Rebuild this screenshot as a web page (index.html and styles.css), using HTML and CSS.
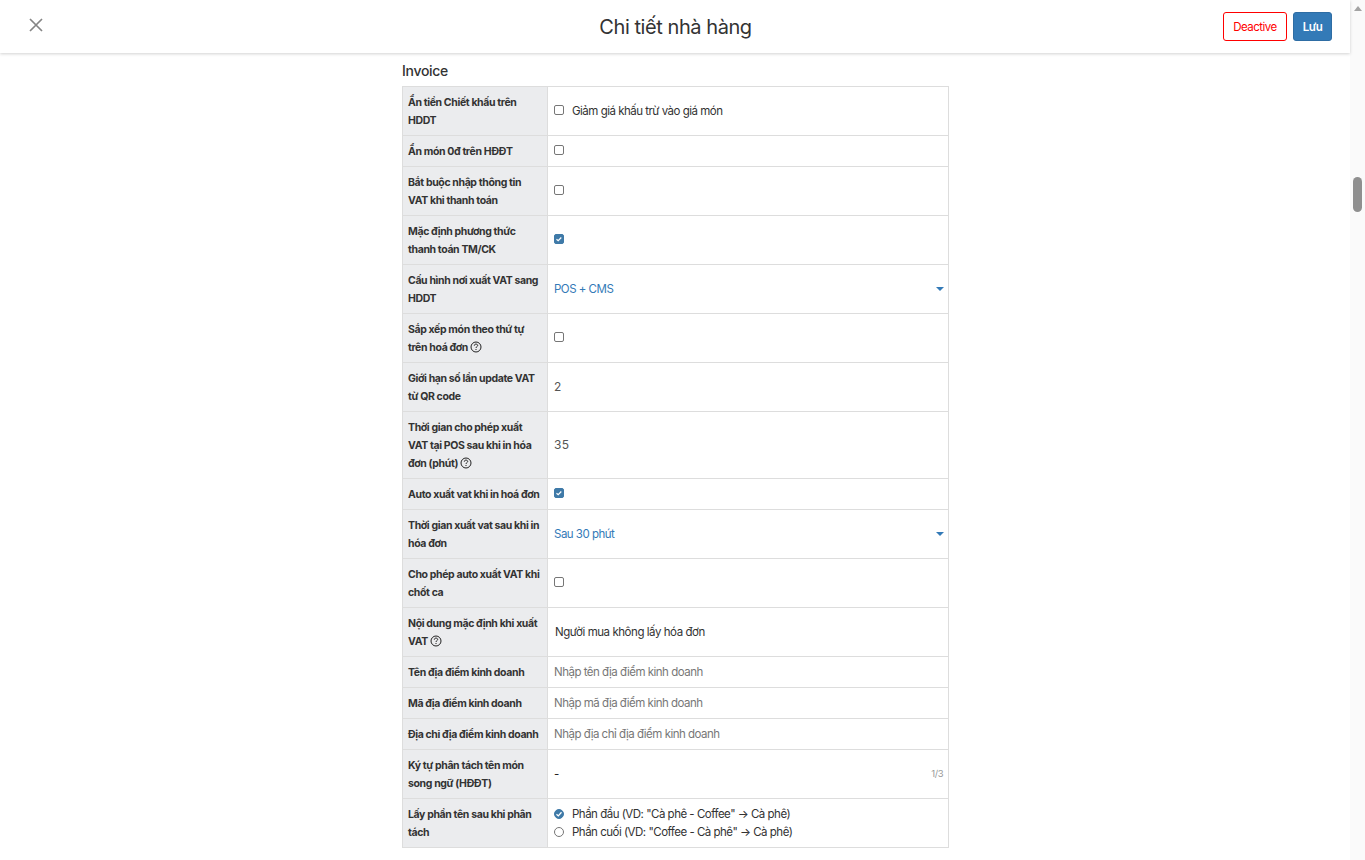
FILE: index.html
```html
<!DOCTYPE html>
<html lang="vi">
<head>
<meta charset="utf-8">
<title>Chi tiết nhà hàng</title>
<link rel="stylesheet" href="styles.css">
</head>
<body>
<div class="page">
	<div class="main">
		<div class="header">
			<button class="close" aria-label="Đóng">
				<svg width="14" height="14" viewBox="0 0 14 14"><path d="M1 1L13 13M13 1L1 13" stroke="#858585" stroke-width="1.7" fill="none"/></svg>
			</button>
			<div class="title">Chi tiết nhà hàng</div>
			<div class="actions">
				<button class="btn btnDeactive">Deactive</button>
				<button class="btn btnSave">Lưu</button>
			</div>
		</div>
		<div class="content">
			<div class="sectionTitle">Invoice</div>
			<div class="form">
				<div class="row">
					<div class="label">Ẩn tiền Chiết khấu trên HDDT</div>
					<div class="value"><span class="check"></span><span class="checkText">Giảm giá khấu trừ vào giá món</span></div>
				</div>
				<div class="row">
					<div class="label">Ẩn món 0đ trên HĐĐT</div>
					<div class="value"><span class="check"></span></div>
				</div>
				<div class="row">
					<div class="label">Bắt buộc nhập thông tin VAT khi thanh toán</div>
					<div class="value"><span class="check"></span></div>
				</div>
				<div class="row">
					<div class="label">Mặc định phương thức thanh toán TM/CK</div>
					<div class="value"><span class="check checked"><svg width="8" height="8" viewBox="0 0 8 8"><path d="M1.5 4.2L3.2 5.7L6.3 2.5" stroke="#fff" stroke-width="1.2" fill="none"/></svg></span></div>
				</div>
				<div class="row">
					<div class="label">Cấu hình nơi xuất VAT sang HDDT</div>
					<div class="value select"><span>POS + CMS</span><i class="caret"></i></div>
				</div>
				<div class="row">
					<div class="label">Sắp xếp món theo thứ tự trên hoá đơn <svg class="help" width="12" height="12" viewBox="0 0 12 12"><circle cx="6" cy="6" r="5" stroke="#222" fill="none"/><path d="M4.3 4.7C4.3 3.7 5 3.1 6 3.1C7 3.1 7.7 3.7 7.7 4.5C7.7 5.6 6 5.6 6 7" stroke="#222" fill="none"/><path d="M6 8V9" stroke="#222" fill="none"/></svg></div>
					<div class="value"><span class="check"></span></div>
				</div>
				<div class="row">
					<div class="label">Giới hạn số lần update VAT từ QR code</div>
					<div class="value number">2</div>
				</div>
				<div class="row">
					<div class="label">Thời gian cho phép xuất VAT tại POS sau khi in hóa đơn (phút) <svg class="help" width="12" height="12" viewBox="0 0 12 12"><circle cx="6" cy="6" r="5" stroke="#222" fill="none"/><path d="M4.3 4.7C4.3 3.7 5 3.1 6 3.1C7 3.1 7.7 3.7 7.7 4.5C7.7 5.6 6 5.6 6 7" stroke="#222" fill="none"/><path d="M6 8V9" stroke="#222" fill="none"/></svg></div>
					<div class="value number">35</div>
				</div>
				<div class="row">
					<div class="label">Auto xuất vat khi in hoá đơn</div>
					<div class="value"><span class="check checked"><svg width="8" height="8" viewBox="0 0 8 8"><path d="M1.5 4.2L3.2 5.7L6.3 2.5" stroke="#fff" stroke-width="1.2" fill="none"/></svg></span></div>
				</div>
				<div class="row">
					<div class="label">Thời gian xuất vat sau khi in hóa đơn</div>
					<div class="value select"><span>Sau 30 phút</span><i class="caret"></i></div>
				</div>
				<div class="row">
					<div class="label">Cho phép auto xuất VAT khi chốt ca</div>
					<div class="value"><span class="check"></span></div>
				</div>
				<div class="row">
					<div class="label">Nội dung mặc định khi xuất VAT <svg class="help" width="12" height="12" viewBox="0 0 12 12"><circle cx="6" cy="6" r="5" stroke="#222" fill="none"/><path d="M4.3 4.7C4.3 3.7 5 3.1 6 3.1C7 3.1 7.7 3.7 7.7 4.5C7.7 5.6 6 5.6 6 7" stroke="#222" fill="none"/><path d="M6 8V9" stroke="#222" fill="none"/></svg></div>
					<div class="value text">Người mua không lấy hóa đơn</div>
				</div>
				<div class="row">
					<div class="label">Tên địa điểm kinh doanh</div>
					<div class="value placeholder">Nhập tên địa điểm kinh doanh</div>
				</div>
				<div class="row">
					<div class="label">Mã địa điểm kinh doanh</div>
					<div class="value placeholder">Nhập mã địa điểm kinh doanh</div>
				</div>
				<div class="row">
					<div class="label">Địa chỉ địa điểm kinh doanh</div>
					<div class="value placeholder">Nhập địa chỉ địa điểm kinh doanh</div>
				</div>
				<div class="row">
					<div class="label">Ký tự phân tách tên món song ngữ (HĐĐT)</div>
					<div class="value split"><span>-</span><span class="counter">1/3</span></div>
				</div>
				<div class="row">
					<div class="label">Lấy phần tên sau khi phân tách</div>
					<div class="value radios">
						<div class="radioLine"><span class="radio on"><svg width="8" height="8" viewBox="0 0 8 8"><path d="M1.5 4.2L3.3 5.9L6.5 2.3" stroke="#fff" stroke-width="1.3" fill="none"/></svg></span>Phần đầu (VD: "Cà phê - Coffee" → Cà phê)</div>
						<div class="radioLine"><span class="radio"></span>Phần cuối (VD: "Coffee - Cà phê" → Cà phê)</div>
					</div>
				</div>
			</div>
		</div>
	</div>
	<div class="scrollbar">
		<i class="scrollUp"></i>
		<div class="thumb"></div>
	</div>
</div>
</body>
</html>
```

FILE: styles.css
```css
*{
	box-sizing: border-box;
}
html,body{
	margin: 0;
	height: 100%;
	overflow: hidden;
}
body{
	font-family: Inter, "Noto Sans", "Liberation Sans", sans-serif;
	color: #333;
	background: #fff;
}
.page{
	display: flex;
	height: 860px;
}
.main{
	flex: 1;
	min-width: 0;
}
.header{
	display: flex;
	align-items: center;
	height: 53px;
	padding: 0 18px 0 29px;
	box-shadow: 0 1px 3px rgba(0,0,0,.18);
	position: relative;
}
.close{
	width: 14px;
	height: 14px;
	padding: 0;
	margin-bottom: 3px;
	border: 0;
	background: none;
	display: flex;
}
.title{
	flex: 1;
	text-align: center;
	font-size: 20px;
	line-height: 28px;
	letter-spacing: -.44px;
	color: #333;
	padding-left: 85px;
}
.actions{
	display: flex;
	gap: 6px;
}
.btn{
	height: 29px;
	font-family: inherit;
	font-size: 11.5px;
	letter-spacing: -.5px;
	border-radius: 3px;
}
.btnDeactive{
	width: 64px;
	padding: 0;
	color: #f00;
	background: #fff;
	border: 1px solid #f00;
}
.btnSave{
	width: 39px;
	padding: 0;
	font-weight: 600;
	color: #fff;
	background: #337ab7;
	border: 1px solid #2e6da4;
}
.content{
	width: 547px;
	margin-left: 402px;
}
.sectionTitle{
	height: 33px;
	padding-top: 9px;
	font-size: 14px;
	line-height: 18px;
	font-weight: 500;
	letter-spacing: -.3px;
}
.form{
	border: 1px solid #ddd;
	border-bottom: 0;
}
.row{
	display: grid;
	grid-template-columns: 145px 1fr;
	border-bottom: 1px solid #ddd;
}
.label{
	padding: 7px 5px 5px;
	font-size: 10.5px;
	line-height: 18px;
	font-weight: 700;
	letter-spacing: -.37px;
	color: #333;
	background: #ebecee;
	border-right: 1px solid #ddd;
}
.help{
	vertical-align: -2px;
}
.value{
	display: flex;
	align-items: center;
	padding: 0 6px;
	font-size: 11.5px;
	letter-spacing: -.5px;
	color: #333;
}
.check{
	display: flex;
	align-items: center;
	justify-content: center;
	width: 10px;
	height: 10px;
	margin-bottom: 2px;
	border: 1px solid #767676;
	border-radius: 2px;
	background: #fff;
}
.check.checked{
	background: #3f7aa8;
	border-color: #3f7aa8;
}
.checkText{
	margin-left: 8px;
}
.select{
	justify-content: space-between;
	color: #337ab7;
	padding-right: 4px;
}
.caret{
	width: 0;
	height: 0;
	border-left: 4px solid transparent;
	border-right: 4px solid transparent;
	border-top: 4px solid #337ab7;
}
.number{
	padding-bottom: 2px;
	font-size: 12px;
	letter-spacing: .4px;
	color: #555;
}
.text{
	padding-left: 7px;
	letter-spacing: -.45px;
}
.placeholder{
	color: #777;
}
.split{
	justify-content: space-between;
	padding-right: 5px;
	color: #222;
}
.counter{
	margin-bottom: 2px;
	font-size: 9.5px;
	color: #999;
}
.radios{
	display: block;
	padding-top: 6px;
}
.radioLine{
	display: flex;
	align-items: center;
	height: 18px;
}
.radio{
	display: flex;
	align-items: center;
	justify-content: center;
	width: 10px;
	height: 10px;
	margin-right: 8px;
	border: 1px solid #767676;
	border-radius: 50%;
}
.radio.on{
	background: #3f7aa8;
	border-color: #3f7aa8;
}
.scrollbar{
	flex: none;
	width: 15px;
	background: #fafafa;
	display: flex;
	flex-direction: column;
	align-items: center;
}
.scrollUp{
	margin-top: 6px;
	width: 0;
	height: 0;
	border-left: 4px solid transparent;
	border-right: 4px solid transparent;
	border-bottom: 5px solid #a3a3a3;
}
.thumb{
	width: 9px;
	height: 35px;
	margin-top: 166px;
	border-radius: 5px;
	background: #8f8f8f;
}
```
